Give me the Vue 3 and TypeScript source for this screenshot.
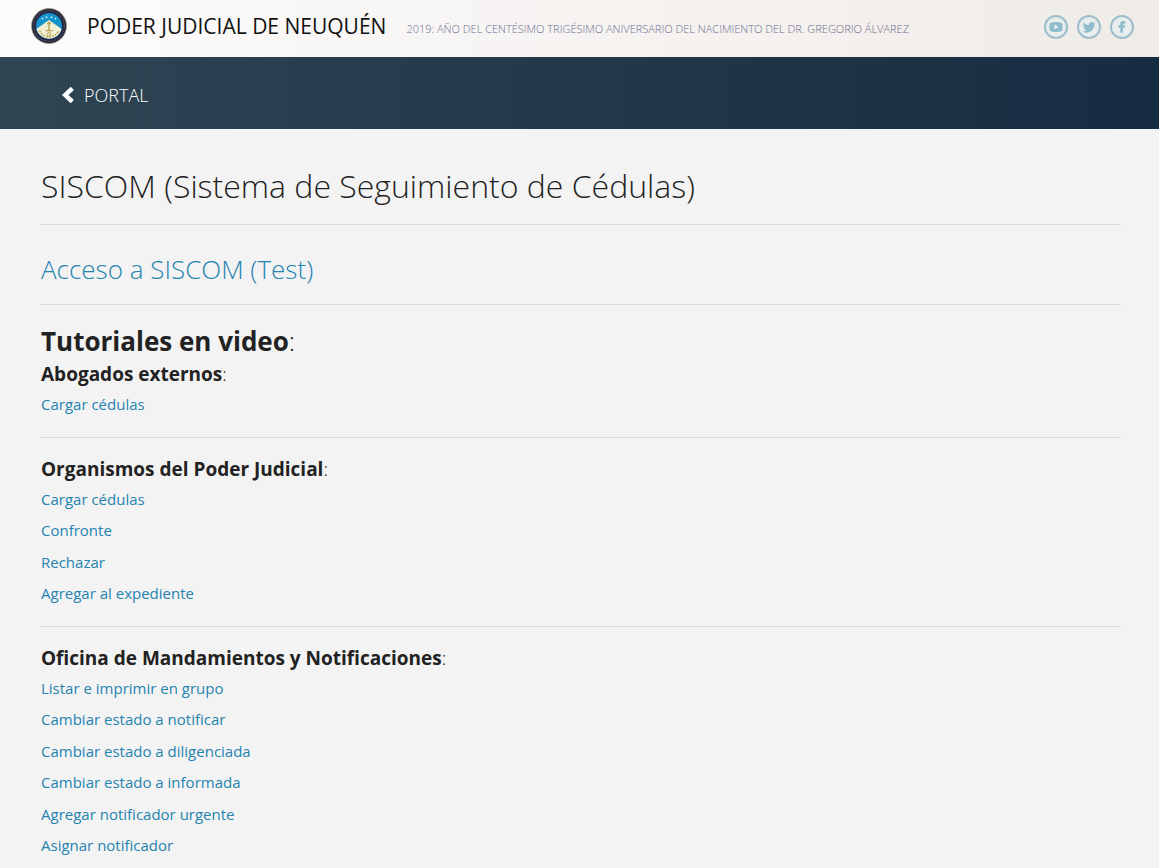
<script setup lang="ts">
interface TutorialGroup {
  title: string
  links: string[]
}

const groups: TutorialGroup[] = [
  { title: 'Abogados externos', links: ['Cargar cédulas'] },
  {
    title: 'Organismos del Poder Judicial',
    links: ['Cargar cédulas', 'Confronte', 'Rechazar', 'Agregar al expediente'],
  },
  {
    title: 'Oficina de Mandamientos y Notificaciones',
    links: [
      'Listar e imprimir en grupo',
      'Cambiar estado a notificar',
      'Cambiar estado a diligenciada',
      'Cambiar estado a informada',
      'Agregar notificador urgente',
      'Asignar notificador',
    ],
  },
]
</script>

<template>
  <div class="page">
    <header class="top">
      <svg class="seal" viewBox="0 0 36 36" aria-hidden="true">
        <circle cx="18" cy="18" r="17.5" fill="#20223e" stroke="#a39a78" stroke-width="0.8" />
        <circle cx="18" cy="18" r="15.2" fill="none" stroke="#a9a894" stroke-width="1.3" stroke-dasharray="1.1 1.3" opacity="0.5" />
        <circle cx="18" cy="18" r="13" fill="#1593cb" />
        <path d="M18 12 L30.6 21 A13 13 0 0 1 5.4 21 Z" fill="#f3efd5" />
        <g fill="#d3eef5">
          <circle cx="11.5" cy="10.6" r="0.9" />
          <circle cx="15.5" cy="9.2" r="0.9" />
          <circle cx="20.5" cy="9.2" r="0.9" />
          <circle cx="24.5" cy="10.6" r="0.9" />
        </g>
        <path d="M18 13.5 V22 M14.5 22.6 H21.5 M16 15.5 H20" stroke="#b8a453" stroke-width="1.4" fill="none" />
        <path d="M8.5 22.5 Q11 28.5 18 29 Q25 28.5 27.5 22.5" stroke="#c1ad5c" stroke-width="1.6" stroke-dasharray="2 1" fill="none" />
        <circle cx="18" cy="26.3" r="1.7" fill="none" stroke="#b8a453" stroke-width="1" />
      </svg>
      <span class="brand">PODER JUDICIAL DE NEUQUÉN</span>
      <span class="motto">2019: AÑO DEL CENTÉSIMO TRIGÉSIMO ANIVERSARIO DEL NACIMIENTO DEL DR. GREGORIO ÁLVAREZ</span>
      <nav class="social" aria-label="Redes sociales">
        <a href="#" aria-label="YouTube">
          <svg viewBox="0 0 24 24">
            <circle cx="12" cy="12" r="11" />
            <path class="glyph" fill-rule="evenodd" d="M8 7.2 Q12 6.8 16 7.2 Q18.2 7.4 18.4 9.5 Q18.7 12 18.4 14.5 Q18.2 16.6 16 16.8 Q12 17.2 8 16.8 Q5.8 16.6 5.6 14.5 Q5.3 12 5.6 9.5 Q5.8 7.4 8 7.2 Z M10.3 9.4 V14.4 L14.7 11.9 Z" />
          </svg>
        </a>
        <a href="#" aria-label="Twitter">
          <svg viewBox="0 0 24 24">
            <circle cx="12" cy="12" r="11" />
            <path class="glyph" d="M18.4 8.2 a5.4 5.4 0 0 1-1.4.5 2.7 2.7 0 0 0 1.1-1.5 5 5 0 0 1-1.6.6 2.7 2.7 0 0 0-4.6 2.4 A7.4 7.4 0 0 1 6.6 7.5 a2.7 2.7 0 0 0 .8 3.6 2.6 2.6 0 0 1-1.2-.3 2.7 2.7 0 0 0 2.1 2.6 2.7 2.7 0 0 1-1.2.1 2.7 2.7 0 0 0 2.5 1.8 5.3 5.3 0 0 1-3.9 1.1 7.6 7.6 0 0 0 11.6-6.8 5 5 0 0 0 1.1-1.4 Z" />
          </svg>
        </a>
        <a href="#" aria-label="Facebook">
          <svg viewBox="0 0 24 24">
            <circle cx="12" cy="12" r="11" />
            <path class="glyph" d="M10.3 17.8 V12.8 H8.3 V10.3 H10.3 V8.9 Q10.3 6.1 13.2 6.1 H15.3 V8.5 H13.9 Q13 8.5 13 9.4 V10.3 H15.3 L15 12.8 H13 V17.8 Z" />
          </svg>
        </a>
      </nav>
    </header>

    <nav class="bar" aria-label="Principal">
      <a href="#" class="portal">
        <svg viewBox="0 0 14 18" aria-hidden="true">
          <path d="M9.7 0.8 L12.9 3.9 L7.5 9 L12.9 14.1 L9.7 17.2 L1 9 Z" fill="#fff" />
        </svg>
        <span>PORTAL</span>
      </a>
    </nav>

    <main class="content">
      <h1>SISCOM (Sistema de Seguimiento de Cédulas)</h1>
      <hr />
      <h2 class="access"><a href="#">Acceso a SISCOM (Test)</a></h2>
      <hr />
      <h2 class="tutorials"><strong>Tutoriales en video</strong>:</h2>
      <template v-for="(group, i) in groups" :key="group.title">
        <hr v-if="i > 0" />
        <section>
          <h3><strong>{{ group.title }}</strong>:</h3>
          <ul>
            <li v-for="link in group.links" :key="link"><a href="#">{{ link }}</a></li>
          </ul>
        </section>
      </template>
    </main>
  </div>
</template>

<style>
body {
  margin: 0;
  background: #f3f3f3;
}
</style>

<style scoped>
.page {
  font-family: "Open Sans", "Noto Sans", sans-serif;
  color: #222;
}
a {
  color: #2583b0;
  text-decoration: none;
}
.top {
  display: flex;
  align-items: center;
  height: 57px;
  box-sizing: border-box;
  padding: 0 25px 6px 31px;
  background: linear-gradient(to right, #fdfcfc, #efebe7);
}
.seal {
  width: 36px;
  height: 36px;
  flex: none;
}
.brand {
  margin-left: 20px;
  font-size: 21px;
  line-height: 30px;
  color: #111;
  white-space: nowrap;
}
.motto {
  margin-left: 20px;
  padding-top: 6px;
  font-size: 11px;
  line-height: 16px;
  font-weight: 300;
  color: #6d6c91;
  white-space: nowrap;
}
.social {
  display: flex;
  gap: 9px;
  margin-left: auto;
  padding-top: 3px;
}
.social a,
.social svg {
  display: block;
  width: 24px;
  height: 24px;
}
.social circle {
  fill: #e9edee;
  stroke: #9dbdca;
  stroke-width: 2;
}
.social .glyph {
  fill: #8ebccd;
}
.bar {
  display: flex;
  align-items: center;
  height: 72px;
  padding: 0 61px;
  background: linear-gradient(to right, #2f4554, #223949 50%, #162c41);
}
.portal {
  display: flex;
  align-items: center;
  gap: 9px;
  padding-top: 4px;
  color: #fff;
  font-size: 18px;
  line-height: 26px;
  font-weight: 300;
}
.portal svg {
  width: 14px;
  height: 18px;
}
.content {
  padding: 34px 38px 0 41px;
}
h1,
h2,
h3 {
  margin: 0;
  font-weight: 300;
}
h1 {
  padding-bottom: 1px;
  font-size: 32px;
  line-height: 46px;
}
hr {
  height: 1px;
  margin: 14px 0 18px;
  border: 0;
  background: #dadada;
}
h2 {
  font-size: 26px;
  line-height: 36px;
}
.access {
  margin: 26px 0 17px;
}
.tutorials {
  margin-bottom: 2px;
}
h3 {
  font-size: 19px;
  line-height: 26px;
}
h3 strong,
h2 strong {
  font-weight: 700;
}
ul {
  margin: 0;
  padding: 6px 0 7px;
  list-style: none;
  display: grid;
  gap: 9px;
  font-size: 15px;
  line-height: 1.5;
}
</style>
